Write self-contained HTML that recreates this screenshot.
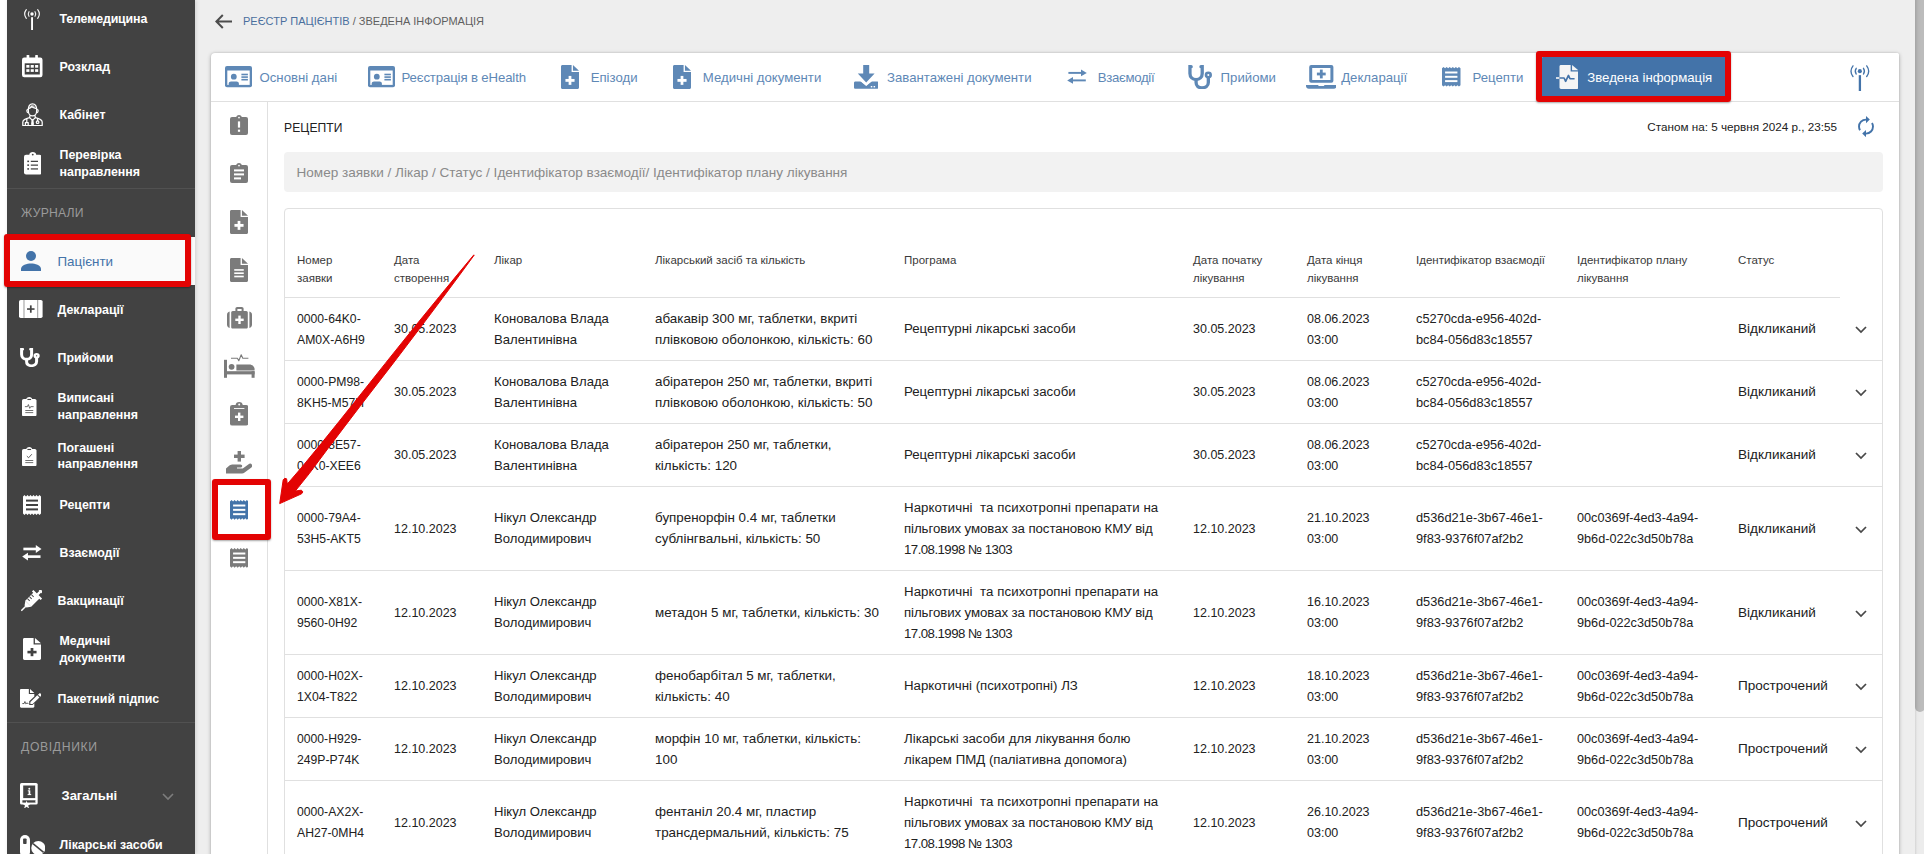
<!DOCTYPE html><html lang="uk"><head><meta charset="utf-8"><title>Зведена інформація</title><style>
*{box-sizing:border-box}
html,body{margin:0;padding:0}
body{width:1924px;height:854px;overflow:hidden;position:relative;background:#eeeeee;
 font-family:"Liberation Sans",sans-serif;color:#212121;font-size:13px}
.abs{position:absolute}
.strip{left:0;top:0;width:7px;height:854px;background:#fff}
.side{left:7px;top:0;width:188px;height:854px;background:#424242;box-shadow:1px 0 4px rgba(0,0,0,.13)}
.side .it{position:absolute;left:0;width:188px;color:#fff;font-weight:700;font-size:12.4px;line-height:17px;white-space:nowrap}
.side .it .tx{position:absolute;top:0}
.side .it svg{position:absolute}
.side .sec{position:absolute;left:14px;color:#9a9a9a;font-size:12.2px;letter-spacing:.2px;font-weight:400}
.side .hr{position:absolute;left:0;width:188px;height:1px;background:#515151}
.side .act{position:absolute;left:0;top:237px;width:188px;height:48px;background:#fafafa}
.crumb{left:243px;top:14px;font-size:11px;line-height:14px;color:#4a6f9e;white-space:nowrap}
.crumb b{font-weight:400;color:#5f5f5f}
.card{left:211px;top:53px;width:1688px;height:830px;background:#fff;border-radius:4px 1.5px 0 0;
 box-shadow:0 1px 4px rgba(0,0,0,.28),0 0 2px rgba(0,0,0,.12)}
.tabline{left:0;top:48px;width:1688px;height:1px;background:#e0e0e0}
.vline{left:56px;top:49px;width:1px;height:800px;background:#e0e0e0}
.tab{position:absolute;top:0;height:48px;color:#5e88b6;font-size:13.2px;line-height:48px;white-space:nowrap}
.tab svg{position:absolute}
.tab .tx{position:absolute;top:1px}
.tabact{position:absolute;left:1330px;top:4px;width:186px;height:41px;background:#4373a9;border-radius:2px}
.ttl{left:73px;top:68px;font-size:12.1px;line-height:14px;color:#212121;letter-spacing:.1px}
.asof{right:62px;top:67px;font-size:11.7px;line-height:14px;color:#212121;white-space:nowrap}
.search{left:73px;top:99px;width:1599px;height:40px;background:#f2f2f2;border-radius:4px;
 font-size:13.55px;line-height:42px;color:#8a8a8a;padding-left:12.5px;white-space:nowrap}
.tbl{left:73px;top:155px;width:1599px;height:700px;border:1px solid #e0e0e0;border-radius:4px}
.th{position:absolute;font-size:11.5px;line-height:18px;color:#3a3a3a;white-space:nowrap}
.td{position:absolute;font-size:13px;line-height:21px;color:#212121;white-space:nowrap}
.c0{font-size:12.2px}.c1,.c5,.c6{font-size:12.5px}.c2{font-size:13.1px}.c3{font-size:13.4px}.c4{font-size:13.25px}.c7{font-size:12.8px}.c8{font-size:12.7px}.c9{font-size:13.55px}
.rl{position:absolute;left:0;height:1px;background:#e0e0e0}
.sb{left:1915px;top:0;width:9px;height:854px;background:linear-gradient(to right,#d4d4d4,#e9e9e9 2px,#ececec 4px)}
.sbt{left:1915px;top:-6px;width:10px;height:718px;background:linear-gradient(to right,#a4a4a4,#b6b6b6 3px,#bcbcbc 6px);border-radius:5px}
</style></head><body>
<div class="abs strip"></div>
<svg class="abs" style="left:214.6px;top:14px" width="17" height="15" viewBox="0 0 17 15" preserveAspectRatio="none" ><path d="M7.8,1L1.4,7.5L7.8,14M1.6,7.5L17,7.5" fill="none" stroke="#4c4c4c" stroke-width="2"/></svg>
<div class="abs crumb">РЕЄСТР ПАЦІЄНТІВ <b>/ ЗВЕДЕНА ІНФОРМАЦІЯ</b></div>
<div class="abs card">
<div class="tabact"></div>
<svg class="abs" style="left:14.400000000000006px;top:13.400000000000006px" width="27" height="21.2" viewBox="0 0 27 21.2" preserveAspectRatio="none" ><rect x="0" y="0" width="27" height="21.2" rx="2" fill="#5e88b6"/><rect x="2.3" y="4.5" width="22.4" height="14.4" fill="#ffffff"/><circle cx="8.8" cy="10.7" r="2.9" fill="#5e88b6"/><path d="M3.7,19L3.7,17.8C3.7,16.2 4.8,15.5 6,15.5L11.6,15.5C12.8,15.5 13.9,16.2 13.9,17.8L13.9,19Z" fill="#5e88b6"/><rect x="16.4" y="7.7" width="6.5" height="1.6" fill="#5e88b6"/><rect x="16.4" y="10.3" width="6.5" height="1.6" fill="#5e88b6"/><rect x="16.4" y="12.9" width="6.5" height="1.6" fill="#5e88b6"/></svg>
<div class="tab" style="left:48.5px;color:#5e88b6"><span class="tx">Основні дані</span></div>
<svg class="abs" style="left:156.8px;top:13.400000000000006px" width="27" height="21.2" viewBox="0 0 27 21.2" preserveAspectRatio="none" ><rect x="0" y="0" width="27" height="21.2" rx="2" fill="#5e88b6"/><rect x="2.3" y="4.5" width="22.4" height="14.4" fill="#ffffff"/><circle cx="8.8" cy="10.7" r="2.9" fill="#5e88b6"/><path d="M3.7,19L3.7,17.8C3.7,16.2 4.8,15.5 6,15.5L11.6,15.5C12.8,15.5 13.9,16.2 13.9,17.8L13.9,19Z" fill="#5e88b6"/><rect x="16.4" y="7.7" width="6.5" height="1.6" fill="#5e88b6"/><rect x="16.4" y="10.3" width="6.5" height="1.6" fill="#5e88b6"/><rect x="16.4" y="12.9" width="6.5" height="1.6" fill="#5e88b6"/></svg>
<div class="tab" style="left:190.5px;color:#5e88b6"><span class="tx"><span style="letter-spacing:-.13px">Реєстрація в eHealth</span></span></div>
<svg class="abs" style="left:350px;top:12px" width="18" height="24" viewBox="0 0 17 22" preserveAspectRatio="none" ><path d="M1.4,0L10,0L10,6.4L17,6.4L17,20.6C17,21.4 16.4,22 15.6,22L1.4,22C.6,22 0,21.4 0,20.6L0,1.4C0,.6 .6,0 1.4,0Z" fill="#5e88b6"/><path d="M11.3,0L17,5.2L11.3,5.2Z" fill="#5e88b6"/><rect x="7.2" y="10" width="2.6" height="8.2" fill="#ffffff"/><rect x="4.2" y="12.8" width="8.6" height="2.6" fill="#ffffff"/></svg>
<div class="tab" style="left:379.70000000000005px;color:#5e88b6"><span class="tx">Епізоди</span></div>
<svg class="abs" style="left:462px;top:12px" width="18" height="24" viewBox="0 0 17 22" preserveAspectRatio="none" ><path d="M1.4,0L10,0L10,6.4L17,6.4L17,20.6C17,21.4 16.4,22 15.6,22L1.4,22C.6,22 0,21.4 0,20.6L0,1.4C0,.6 .6,0 1.4,0Z" fill="#5e88b6"/><path d="M11.3,0L17,5.2L11.3,5.2Z" fill="#5e88b6"/><rect x="7.2" y="10" width="2.6" height="8.2" fill="#ffffff"/><rect x="4.2" y="12.8" width="8.6" height="2.6" fill="#ffffff"/></svg>
<div class="tab" style="left:491.79999999999995px;color:#5e88b6"><span class="tx">Медичні документи</span></div>
<svg class="abs" style="left:643px;top:12px" width="24.4" height="23.8" viewBox="0 0 24.4 23.8" preserveAspectRatio="none" ><path d="M9.2,0L15.2,0L15.2,8.6L20.6,8.6L12.2,17.4L3.8,8.6L9.2,8.6Z" fill="#5e88b6"/><path d="M1.4,16.4L7.2,16.4L12.2,20.6L17.2,16.4L23,16.4C23.8,16.4 24.4,17 24.4,17.8L24.4,22.4C24.4,23.2 23.8,23.8 23,23.8L1.4,23.8C.6,23.8 0,23.2 0,22.4L0,17.8C0,17 .6,16.4 1.4,16.4Z" fill="#5e88b6"/><path d="M6.6,15.6L12.2,20.2L17.8,15.6" fill="none" stroke="#ffffff" stroke-width="1.3"/><rect x="16.8" y="21" width="1.5" height="1.4" fill="#ffffff"/><rect x="19.6" y="21" width="1.5" height="1.4" fill="#ffffff"/></svg>
<div class="tab" style="left:676px;color:#5e88b6"><span class="tx">Завантажені документи</span></div>
<svg class="abs" style="left:856px;top:16.400000000000006px" width="20" height="15.4" viewBox="0 0 20 16" preserveAspectRatio="none" ><rect x="1.4" y="3.05" width="15" height="2" fill="#5e88b6"/><path d="M14,0.44999999999999973L19.8,4.05L14,7.65Z" fill="#5e88b6"/><rect x="3.6" y="10.85" width="15.2" height="2" fill="#5e88b6"/><path d="M6,8.25L.2,11.85L6,15.45Z" fill="#5e88b6"/></svg>
<div class="tab" style="left:886.8px;color:#5e88b6"><span class="tx"><span style="letter-spacing:-.32px">Взаємодії</span></span></div>
<svg class="abs" style="left:976.5px;top:11.5px" width="24.5" height="24.5" viewBox="0 0 20 21" preserveAspectRatio="none" ><g fill="none" stroke="#5e88b6" stroke-width="2.7" stroke-linecap="round"><path d="M2.6,1.4L1.6,1.4L1.6,7.2C1.6,10.4 3.8,12.4 6.6,12.4C9.4,12.4 11.6,10.4 11.6,7.2L11.6,1.4L10.6,1.4"/><path d="M6.6,12.6L6.6,15C6.6,18 8.6,19.6 11.4,19.6C14.2,19.6 16.6,18 16.6,15L16.6,11.2"/><circle cx="16.6" cy="8.6" r="1.9" stroke-width="2.16"/></g></svg>
<div class="tab" style="left:1009.5999999999999px;color:#5e88b6"><span class="tx">Прийоми</span></div>
<svg class="abs" style="left:1094.6px;top:12px" width="30.6" height="23.8" viewBox="0 0 30.6 23.8" preserveAspectRatio="none" ><rect x="3.2" y="0" width="24.2" height="17.8" rx="2" fill="#5e88b6"/><rect x="6.2" y="3" width="18.2" height="12" fill="#ffffff"/><rect x="13.9" y="4.6" width="2.8" height="8.8" fill="#5e88b6"/><rect x="10.9" y="7.6" width="8.8" height="2.8" fill="#5e88b6"/><path d="M0,20L12,20L12.8,21L17.8,21L18.6,20L30.6,20L30.6,21C30.6,22.6 29.4,23.8 27.8,23.8L2.8,23.8C1.2,23.8 0,22.6 0,21Z" fill="#5e88b6"/></svg>
<div class="tab" style="left:1130.2px;color:#5e88b6"><span class="tx">Декларації</span></div>
<svg class="abs" style="left:1231.3px;top:14px" width="18.5" height="19.6" viewBox="0 0 18 20" preserveAspectRatio="none" ><path d="M0,1.4L1.50,0L3.00,1.4L4.50,0L6.00,1.4L7.50,0L9.00,1.4L10.50,0L12.00,1.4L13.50,0L15.00,1.4L16.50,0L18.00,1.4L18,18.6L16.50,20L15.00,18.6L13.50,20L12.00,18.6L10.50,20L9.00,18.6L7.50,20L6.00,18.6L4.50,20L3.00,18.6L1.50,20L0.00,18.6Z" fill="#5e88b6"/><rect x="3" y="4.6" width="12" height="2" fill="#ffffff"/><rect x="3" y="9" width="12" height="2" fill="#ffffff"/><rect x="3" y="13.4" width="12" height="2" fill="#ffffff"/></svg>
<div class="tab" style="left:1261.5px;color:#5e88b6"><span class="tx">Рецепти</span></div>
<svg class="abs" style="left:1345px;top:12px" width="22.3" height="24" viewBox="0 0 20.4 24" preserveAspectRatio="none" ><path d="M4.6,0L13.4,0L13.4,6.4L20.4,6.4L20.4,22.6C20.4,23.4 19.8,24 19,24L4.6,24C3.8,24 3.2,23.4 3.2,22.6L3.2,1.4C3.2,.6 3.8,0 4.6,0Z" fill="#f5f5f5"/><path d="M14.7,0L20.4,5.2L14.7,5.2Z" fill="#f5f5f5"/><rect x="0" y="12.2" width="3.2" height="1.6" fill="#f5f5f5"/><path d="M3.2,13L7.4,13L8.8,16.4L11.4,10.4L12.8,13.8L17,13.8" fill="none" stroke="#4373a9" stroke-width="1.5" stroke-linejoin="round"/></svg>
<div class="tab" style="left:1376.3px;color:#ffffff"><span class="tx">Зведена інформація</span></div>
<svg class="abs" style="left:1638.3px;top:11.599999999999994px" width="21.7" height="26" viewBox="0 0 18 21" preserveAspectRatio="none" ><circle cx="9" cy="5" r="1.7" fill="#4373a9"/><rect x="8.1" y="8.2" width="1.9" height="12.8" fill="#4373a9"/><g fill="none" stroke="#4373a9" stroke-width="1.1" stroke-linecap="round"><path d="M6,2.7Q4.4,5 6,7.3"/><path d="M12,2.7Q13.6,5 12,7.3"/><path d="M3.3,0.7Q0,5 3.3,9.3"/><path d="M14.7,0.7Q18,5 14.7,9.3"/></g></svg>
<div class="abs tabline"></div><div class="abs vline"></div>
<svg class="abs" style="left:19px;top:62px" width="18" height="20" viewBox="0 0 18 20" preserveAspectRatio="none" ><rect x="0" y="2" width="18" height="18" rx="2" fill="#7b7b7b"/><path d="M6.2,2.6C6.2,1 7.4,0 9,0C10.6,0 11.8,1 11.8,2.6L12.4,3.6L5.6,3.6Z" fill="#7b7b7b"/><circle cx="9" cy="2.6" r=".9" fill="#ffffff"/><rect x="7.9" y="6.4" width="2.2" height="6.2" fill="#ffffff"/><rect x="7.9" y="14.6" width="2.2" height="2.2" fill="#ffffff"/></svg>
<svg class="abs" style="left:19px;top:110px" width="18" height="20" viewBox="0 0 18 20" preserveAspectRatio="none" ><rect x="0" y="2" width="18" height="18" rx="2" fill="#7b7b7b"/><path d="M6.2,2.6C6.2,1 7.4,0 9,0C10.6,0 11.8,1 11.8,2.6L12.4,3.6L5.6,3.6Z" fill="#7b7b7b"/><circle cx="9" cy="2.6" r=".9" fill="#ffffff"/><rect x="4" y="6.4" width="10" height="2" fill="#ffffff"/><rect x="4" y="10.4" width="10" height="2" fill="#ffffff"/><rect x="4" y="14.4" width="7" height="2" fill="#ffffff"/></svg>
<svg class="abs" style="left:19px;top:157px" width="18" height="24" viewBox="0 0 17 22" preserveAspectRatio="none" ><path d="M1.4,0L10,0L10,6.4L17,6.4L17,20.6C17,21.4 16.4,22 15.6,22L1.4,22C.6,22 0,21.4 0,20.6L0,1.4C0,.6 .6,0 1.4,0Z" fill="#7b7b7b"/><path d="M11.3,0L17,5.2L11.3,5.2Z" fill="#7b7b7b"/><rect x="7.2" y="10" width="2.6" height="8.2" fill="#ffffff"/><rect x="4.2" y="12.8" width="8.6" height="2.6" fill="#ffffff"/></svg>
<svg class="abs" style="left:19px;top:205px" width="18" height="24" viewBox="0 0 17 22" preserveAspectRatio="none" ><path d="M1.4,0L10,0L10,6.4L17,6.4L17,20.6C17,21.4 16.4,22 15.6,22L1.4,22C.6,22 0,21.4 0,20.6L0,1.4C0,.6 .6,0 1.4,0Z" fill="#7b7b7b"/><path d="M11.3,0L17,5.2L11.3,5.2Z" fill="#7b7b7b"/><rect x="4" y="10.2" width="9" height="1.5" fill="#ffffff"/><rect x="4" y="13.2" width="9" height="1.5" fill="#ffffff"/><rect x="4" y="16.2" width="9" height="1.5" fill="#ffffff"/></svg>
<svg class="abs" style="left:15.5px;top:254.2px" width="25" height="21.6" viewBox="0 0 25 21.6" preserveAspectRatio="none" ><path d="M8.4,4L8.4,1.8C8.4,.8 9.2,0 10.2,0L14.8,0C15.8,0 16.6,.8 16.6,1.8L16.6,4L19.2,4C20.2,4 20.8,4.8 20.8,5.6L20.8,20C20.8,21 20.2,21.6 19.2,21.6L5.8,21.6C4.8,21.6 4.2,21 4.2,20L4.2,5.6C4.2,4.8 4.8,4 5.8,4ZM10.4,4L14.6,4L14.6,2L10.4,2Z" fill="#7b7b7b"/><path d="M2.6,4.6C1,5 0,6.2 0,7.8L0,17.8C0,19.4 1,20.6 2.6,21Z" fill="#7b7b7b"/><path d="M22.4,4.6C24,5 25,6.2 25,7.8L25,17.8C25,19.4 24,20.6 22.4,21Z" fill="#7b7b7b"/><rect x="11.3" y="8.6" width="2.4" height="8.4" fill="#ffffff"/><rect x="8.3" y="11.6" width="8.4" height="2.4" fill="#ffffff"/></svg>
<svg class="abs" style="left:13px;top:301px" width="30.6" height="23.8" viewBox="0 0 30.6 23.8" preserveAspectRatio="none" ><rect x="0" y="5.8" width="3" height="18" fill="#7b7b7b"/><rect x="0" y="17.2" width="30.6" height="3.2" fill="#7b7b7b"/><rect x="27.6" y="17.2" width="3" height="6.6" fill="#7b7b7b"/><path d="M12.4,16.4L12.4,10.6L25.4,10.6C28.4,10.6 30.6,12.8 30.6,15.4L30.6,16.4Z" fill="#7b7b7b"/><circle cx="7.6" cy="12.8" r="2.9" fill="#7b7b7b"/><path d="M7,4.2L13.4,4.2L14.8,6.8L17.2,0.8L18.8,4.2L24.4,4.2" fill="none" stroke="#7b7b7b" stroke-width="1.1" stroke-linejoin="round"/></svg>
<svg class="abs" style="left:19px;top:349px" width="18.4" height="23.6" viewBox="0 0 18.4 23.6" preserveAspectRatio="none" ><rect x="0" y="3" width="18.4" height="20.6" rx="2.2" fill="#7b7b7b"/><path d="M5.6,3.4C5.6,1.2 7.2,0 9.2,0C11.2,0 12.8,1.2 12.8,3.4L13.6,6L4.8,6Z" fill="#7b7b7b"/><circle cx="9.2" cy="2.6" r="1" fill="#ffffff"/><rect x="4" y="6" width="10.4" height=".9" fill="#ffffff"/><rect x="8" y="10.6" width="2.4" height="8.4" fill="#ffffff"/><rect x="5" y="13.6" width="8.4" height="2.4" fill="#ffffff"/></svg>
<svg class="abs" style="left:14.699999999999989px;top:397.8px" width="26.6" height="22.8" viewBox="0 0 26.6 22.8" preserveAspectRatio="none" ><rect x="11.6" y="0" width="3.4" height="10.6" fill="#7b7b7b"/><rect x="8" y="3.6" width="10.6" height="3.4" fill="#7b7b7b"/><path d="M0,17.4L3.4,14.6C4.6,13.6 5.8,13.4 7,13.4L14.4,13.4C15.6,13.4 16.2,14.2 16.2,15C16.2,15.8 15.6,16.6 14.4,16.6L11,16.6L11,17.4L16.8,17.4L22.6,13.2C23.6,12.4 25,12.4 25.8,13.4C26.6,14.4 26.4,15.6 25.4,16.4L18.6,21.6C17.8,22.2 17,22.6 16,22.6L0,22.6Z" fill="#7b7b7b"/></svg>
<svg class="abs" style="left:19px;top:447.3px" width="18.4" height="19.7" viewBox="0 0 18 20" preserveAspectRatio="none" ><path d="M0,1.4L1.50,0L3.00,1.4L4.50,0L6.00,1.4L7.50,0L9.00,1.4L10.50,0L12.00,1.4L13.50,0L15.00,1.4L16.50,0L18.00,1.4L18,18.6L16.50,20L15.00,18.6L13.50,20L12.00,18.6L10.50,20L9.00,18.6L7.50,20L6.00,18.6L4.50,20L3.00,18.6L1.50,20L0.00,18.6Z" fill="#4373a9"/><rect x="3" y="4.6" width="12" height="2" fill="#ffffff"/><rect x="3" y="9" width="12" height="2" fill="#ffffff"/><rect x="3" y="13.4" width="12" height="2" fill="#ffffff"/></svg>
<svg class="abs" style="left:19px;top:495.29999999999995px" width="18.4" height="19.7" viewBox="0 0 18 20" preserveAspectRatio="none" ><path d="M0,1.4L1.50,0L3.00,1.4L4.50,0L6.00,1.4L7.50,0L9.00,1.4L10.50,0L12.00,1.4L13.50,0L15.00,1.4L16.50,0L18.00,1.4L18,18.6L16.50,20L15.00,18.6L13.50,20L12.00,18.6L10.50,20L9.00,18.6L7.50,20L6.00,18.6L4.50,20L3.00,18.6L1.50,20L0.00,18.6Z" fill="#7b7b7b"/><rect x="3" y="4.6" width="12" height="2" fill="#ffffff"/><rect x="3" y="9" width="12" height="2" fill="#ffffff"/><rect x="3" y="13.4" width="12" height="2" fill="#ffffff"/></svg>
<div class="abs ttl">РЕЦЕПТИ</div>
<div class="abs asof">Станом на: 5 червня 2024 р., 23:55</div>
<svg class="abs" style="left:1644.5px;top:63.3px" width="20" height="21.2" viewBox="0 0 20 21.2" preserveAspectRatio="none" ><g fill="none" stroke="#4373a9" stroke-width="1.9"><path d="M10,3.6C6,3.6 3,6.8 3,10.6C3,12 3.4,13.2 4,14.2"/><path d="M10,17.6C14,17.6 17,14.4 17,10.6C17,9.2 16.6,8 16,7"/></g><path d="M10,0L10,7.2L13.8,3.6Z" fill="#4373a9"/><path d="M10,21.2L10,14L6.2,17.6Z" fill="#4373a9"/></svg>
<div class="abs search">Номер заявки / Лікар / Статус / Ідентифікатор взаємодії/ Ідентифікатор плану лікування</div>
<div class="abs tbl">
<div class="th" style="left:12px;top:42px">Номер<br>заявки</div>
<div class="th" style="left:109px;top:42px">Дата<br>створення</div>
<div class="th" style="left:209px;top:42px">Лікар</div>
<div class="th" style="left:370px;top:42px">Лікарський засіб та кількість</div>
<div class="th" style="left:619px;top:42px">Програма</div>
<div class="th" style="left:908px;top:42px">Дата початку<br>лікування</div>
<div class="th" style="left:1022px;top:42px">Дата кінця<br>лікування</div>
<div class="th" style="left:1131px;top:42px">Ідентифікатор взаємодії</div>
<div class="th" style="left:1292px;top:42px">Ідентифікатор плану<br>лікування</div>
<div class="th" style="left:1453px;top:42px">Статус</div>
<div class="rl" style="top:88px;width:1555px"></div>
<div class="td c0" style="left:12px;top:100px">0000-64K0-<br>AM0X-A6H9</div>
<div class="td c1" style="left:109px;top:110px">30.05.2023</div>
<div class="td c2" style="left:209px;top:99px">Коновалова Влада<br>Валентинівна</div>
<div class="td c3" style="left:370px;top:99px">абакавір 300 мг, таблетки, вкриті<br>плівковою оболонкою, кількість: 60</div>
<div class="td c4" style="left:619px;top:109px">Рецептурні лікарські засоби</div>
<div class="td c5" style="left:908px;top:110px">30.05.2023</div>
<div class="td c6" style="left:1022px;top:100px">08.06.2023<br>03:00</div>
<div class="td c7" style="left:1131px;top:99px">c5270cda-e956-402d-<br>bc84-056d83c18557</div>
<div class="td c9" style="left:1453px;top:109px">Відкликаний</div>
<svg class="abs" style="left:1569.7px;top:117.19999999999999px" width="12" height="8" viewBox="0 0 12 8" preserveAspectRatio="none" ><path d="M1,1L6,6L11,1" fill="none" stroke="#484848" stroke-width="1.75"/></svg>
<div class="rl" style="top:151px;width:1597px"></div>
<div class="td c0" style="left:12px;top:163px">0000-PM98-<br>8KH5-M57H</div>
<div class="td c1" style="left:109px;top:173px">30.05.2023</div>
<div class="td c2" style="left:209px;top:162px">Коновалова Влада<br>Валентинівна</div>
<div class="td c3" style="left:370px;top:162px">абіратерон 250 мг, таблетки, вкриті<br>плівковою оболонкою, кількість: 50</div>
<div class="td c4" style="left:619px;top:172px">Рецептурні лікарські засоби</div>
<div class="td c5" style="left:908px;top:173px">30.05.2023</div>
<div class="td c6" style="left:1022px;top:163px">08.06.2023<br>03:00</div>
<div class="td c7" style="left:1131px;top:162px">c5270cda-e956-402d-<br>bc84-056d83c18557</div>
<div class="td c9" style="left:1453px;top:172px">Відкликаний</div>
<svg class="abs" style="left:1569.7px;top:180.2px" width="12" height="8" viewBox="0 0 12 8" preserveAspectRatio="none" ><path d="M1,1L6,6L11,1" fill="none" stroke="#484848" stroke-width="1.75"/></svg>
<div class="rl" style="top:214px;width:1597px"></div>
<div class="td c0" style="left:12px;top:226px">0000-8E57-<br>04K0-XEE6</div>
<div class="td c1" style="left:109px;top:236px">30.05.2023</div>
<div class="td c2" style="left:209px;top:225px">Коновалова Влада<br>Валентинівна</div>
<div class="td c3" style="left:370px;top:225px">абіратерон 250 мг, таблетки,<br>кількість: 120</div>
<div class="td c4" style="left:619px;top:235px">Рецептурні лікарські засоби</div>
<div class="td c5" style="left:908px;top:236px">30.05.2023</div>
<div class="td c6" style="left:1022px;top:226px">08.06.2023<br>03:00</div>
<div class="td c7" style="left:1131px;top:225px">c5270cda-e956-402d-<br>bc84-056d83c18557</div>
<div class="td c9" style="left:1453px;top:235px">Відкликаний</div>
<svg class="abs" style="left:1569.7px;top:243.2px" width="12" height="8" viewBox="0 0 12 8" preserveAspectRatio="none" ><path d="M1,1L6,6L11,1" fill="none" stroke="#484848" stroke-width="1.75"/></svg>
<div class="rl" style="top:277px;width:1597px"></div>
<div class="td c0" style="left:12px;top:299px">0000-79A4-<br>53H5-AKT5</div>
<div class="td c1" style="left:109px;top:310px">12.10.2023</div>
<div class="td c2" style="left:209px;top:298px">Нікул Олександр<br>Володимирович</div>
<div class="td c3" style="left:370px;top:298px">бупренорфін 0.4 мг, таблетки<br>сублінгвальні, кількість: 50</div>
<div class="td c4" style="left:619px;top:288px"><span style="letter-spacing:.065px">Наркотичні&nbsp; та психотропні препарати на</span><br><span style="letter-spacing:-.08px">пільгових умовах за постановою КМУ від</span><br><span style="letter-spacing:-.55px">17.08.1998 № 1303</span></div>
<div class="td c5" style="left:908px;top:310px">12.10.2023</div>
<div class="td c6" style="left:1022px;top:299px">21.10.2023<br>03:00</div>
<div class="td c7" style="left:1131px;top:298px">d536d21e-3b67-46e1-<br>9f83-9376f07af2b2</div>
<div class="td c8" style="left:1292px;top:299px">00c0369f-4ed3-4a94-<br>9b6d-022c3d50b78a</div>
<div class="td c9" style="left:1453px;top:309px">Відкликаний</div>
<svg class="abs" style="left:1569.7px;top:316.70000000000005px" width="12" height="8" viewBox="0 0 12 8" preserveAspectRatio="none" ><path d="M1,1L6,6L11,1" fill="none" stroke="#484848" stroke-width="1.75"/></svg>
<div class="rl" style="top:361px;width:1597px"></div>
<div class="td c0" style="left:12px;top:383px">0000-X81X-<br>9560-0H92</div>
<div class="td c1" style="left:109px;top:394px">12.10.2023</div>
<div class="td c2" style="left:209px;top:382px">Нікул Олександр<br>Володимирович</div>
<div class="td c3" style="left:370px;top:393px">метадон 5 мг, таблетки, кількість: 30</div>
<div class="td c4" style="left:619px;top:372px"><span style="letter-spacing:.065px">Наркотичні&nbsp; та психотропні препарати на</span><br><span style="letter-spacing:-.08px">пільгових умовах за постановою КМУ від</span><br><span style="letter-spacing:-.55px">17.08.1998 № 1303</span></div>
<div class="td c5" style="left:908px;top:394px">12.10.2023</div>
<div class="td c6" style="left:1022px;top:383px">16.10.2023<br>03:00</div>
<div class="td c7" style="left:1131px;top:382px">d536d21e-3b67-46e1-<br>9f83-9376f07af2b2</div>
<div class="td c8" style="left:1292px;top:383px">00c0369f-4ed3-4a94-<br>9b6d-022c3d50b78a</div>
<div class="td c9" style="left:1453px;top:393px">Відкликаний</div>
<svg class="abs" style="left:1569.7px;top:400.70000000000005px" width="12" height="8" viewBox="0 0 12 8" preserveAspectRatio="none" ><path d="M1,1L6,6L11,1" fill="none" stroke="#484848" stroke-width="1.75"/></svg>
<div class="rl" style="top:445px;width:1597px"></div>
<div class="td c0" style="left:12px;top:457px">0000-H02X-<br>1X04-T822</div>
<div class="td c1" style="left:109px;top:467px">12.10.2023</div>
<div class="td c2" style="left:209px;top:456px">Нікул Олександр<br>Володимирович</div>
<div class="td c3" style="left:370px;top:456px">фенобарбітал 5 мг, таблетки,<br>кількість: 40</div>
<div class="td c4" style="left:619px;top:466px">Наркотичні (психотропні) ЛЗ</div>
<div class="td c5" style="left:908px;top:467px">12.10.2023</div>
<div class="td c6" style="left:1022px;top:457px">18.10.2023<br>03:00</div>
<div class="td c7" style="left:1131px;top:456px">d536d21e-3b67-46e1-<br>9f83-9376f07af2b2</div>
<div class="td c8" style="left:1292px;top:457px">00c0369f-4ed3-4a94-<br>9b6d-022c3d50b78a</div>
<div class="td c9" style="left:1453px;top:466px">Прострочений</div>
<svg class="abs" style="left:1569.7px;top:474.20000000000005px" width="12" height="8" viewBox="0 0 12 8" preserveAspectRatio="none" ><path d="M1,1L6,6L11,1" fill="none" stroke="#484848" stroke-width="1.75"/></svg>
<div class="rl" style="top:508px;width:1597px"></div>
<div class="td c0" style="left:12px;top:520px">0000-H929-<br>249P-P74K</div>
<div class="td c1" style="left:109px;top:530px">12.10.2023</div>
<div class="td c2" style="left:209px;top:519px">Нікул Олександр<br>Володимирович</div>
<div class="td c3" style="left:370px;top:519px">морфін 10 мг, таблетки, кількість:<br>100</div>
<div class="td c4" style="left:619px;top:519px">Лікарські засоби для лікування болю<br>лікарем ПМД (паліативна допомога)</div>
<div class="td c5" style="left:908px;top:530px">12.10.2023</div>
<div class="td c6" style="left:1022px;top:520px">21.10.2023<br>03:00</div>
<div class="td c7" style="left:1131px;top:519px">d536d21e-3b67-46e1-<br>9f83-9376f07af2b2</div>
<div class="td c8" style="left:1292px;top:520px">00c0369f-4ed3-4a94-<br>9b6d-022c3d50b78a</div>
<div class="td c9" style="left:1453px;top:529px">Прострочений</div>
<svg class="abs" style="left:1569.7px;top:537.2px" width="12" height="8" viewBox="0 0 12 8" preserveAspectRatio="none" ><path d="M1,1L6,6L11,1" fill="none" stroke="#484848" stroke-width="1.75"/></svg>
<div class="rl" style="top:571px;width:1597px"></div>
<div class="td c0" style="left:12px;top:593px">0000-AX2X-<br>AH27-0MH4</div>
<div class="td c1" style="left:109px;top:604px">12.10.2023</div>
<div class="td c2" style="left:209px;top:592px">Нікул Олександр<br>Володимирович</div>
<div class="td c3" style="left:370px;top:592px">фентаніл 20.4 мг, пластир<br>трансдермальний, кількість: 75</div>
<div class="td c4" style="left:619px;top:582px"><span style="letter-spacing:.065px">Наркотичні&nbsp; та психотропні препарати на</span><br><span style="letter-spacing:-.08px">пільгових умовах за постановою КМУ від</span><br><span style="letter-spacing:-.55px">17.08.1998 № 1303</span></div>
<div class="td c5" style="left:908px;top:604px">12.10.2023</div>
<div class="td c6" style="left:1022px;top:593px">26.10.2023<br>03:00</div>
<div class="td c7" style="left:1131px;top:592px">d536d21e-3b67-46e1-<br>9f83-9376f07af2b2</div>
<div class="td c8" style="left:1292px;top:593px">00c0369f-4ed3-4a94-<br>9b6d-022c3d50b78a</div>
<div class="td c9" style="left:1453px;top:603px">Прострочений</div>
<svg class="abs" style="left:1569.7px;top:610.7px" width="12" height="8" viewBox="0 0 12 8" preserveAspectRatio="none" ><path d="M1,1L6,6L11,1" fill="none" stroke="#484848" stroke-width="1.75"/></svg>
</div>
</div>
<div class="abs side">
<div class="act"></div>
<svg class="abs" style="left:16px;top:9px" width="18" height="21" viewBox="0 0 18 21" preserveAspectRatio="none" ><circle cx="9" cy="5" r="1.7" fill="#ffffff"/><rect x="8.1" y="8.2" width="1.9" height="12.8" fill="#ffffff"/><g fill="none" stroke="#ffffff" stroke-width="1.1" stroke-linecap="round"><path d="M6,2.7Q4.4,5 6,7.3"/><path d="M12,2.7Q13.6,5 12,7.3"/><path d="M3.3,0.7Q0,5 3.3,9.3"/><path d="M14.7,0.7Q18,5 14.7,9.3"/></g></svg>
<svg class="abs" style="left:15px;top:55px" width="20.5" height="22.5" viewBox="0 0 20.5 22.5" preserveAspectRatio="none" ><rect x="0" y="2.6" width="20.5" height="19.6" rx="2.2" fill="#ffffff"/><rect x="4.6" y="0" width="2.7" height="4.5" rx=".6" fill="#ffffff"/><rect x="13.2" y="0" width="2.7" height="4.5" rx=".6" fill="#ffffff"/><rect x="2.7" y="8.3" width="15.1" height="11.2" fill="#424242"/><rect x="4.3" y="10" width="3.1" height="2.7" fill="#ffffff"/><rect x="4.3" y="14.2" width="3.1" height="2.7" fill="#ffffff"/><rect x="8.7" y="10" width="3.1" height="2.7" fill="#ffffff"/><rect x="8.7" y="14.2" width="3.1" height="2.7" fill="#ffffff"/><rect x="13.1" y="10" width="3.1" height="2.7" fill="#ffffff"/><rect x="13.1" y="14.2" width="3.1" height="2.7" fill="#ffffff"/></svg>
<svg class="abs" style="left:15px;top:102.5px" width="21" height="23.4" viewBox="0 0 21 23.4" preserveAspectRatio="none" ><g fill="none" stroke="#ffffff" stroke-width="1.25" stroke-linejoin="round" stroke-linecap="round"><path d="M6.3,7.2C6.3,3 8,1 10.5,1C13,1 14.7,3 14.7,7.2C14.7,10.5 13,13 10.5,13C8,13 6.3,10.5 6.3,7.2Z"/><path d="M6.4,5.6C8,5.4 9,4.4 9.6,3.4C10.8,4.8 12.8,5.4 14.6,5.6"/><path d="M5.6,6.6C4.6,6.6 4.6,9.4 6,9.6M15.4,6.6C16.4,6.6 16.4,9.4 15,9.6"/><path d="M8,12.6L7.6,14.6C4,15.4 1,16.6 .8,19L.8,22.6L20.2,22.6L20.2,19C20,16.6 17,15.4 13.4,14.6L13,12.6"/><path d="M7.6,14.6L10.5,17.4L13.4,14.6"/><path d="M4.8,15.8L4.8,19.6M3.4,19.6L3.4,22.2M6.2,19.6L6.2,22.2M3.4,19.6L6.2,19.6"/><circle cx="15.6" cy="19.2" r="1.3"/><path d="M15.6,15.6L15.6,17.8"/></g><path d="M9.6,16.6L11.4,16.6L12,21.4L10.5,22.6L9,21.4Z" fill="#ffffff"/><path d="M8.6,3C9.6,1.6 11.6,1.6 12.6,3L12.8,5L8.4,5Z" fill="#ffffff" opacity=".55"/></svg>
<svg class="abs" style="left:16.5px;top:152px" width="17.5" height="22.5" viewBox="0 0 17 22" preserveAspectRatio="none" ><rect x="0" y="2.6" width="17" height="19.4" rx="2" fill="#ffffff"/><path d="M5.2,2.6C5.2,1 6.6,0 8.5,0C10.4,0 11.8,1 11.8,2.6L12.6,5L4.4,5Z" fill="#ffffff"/><circle cx="8.5" cy="2.5" r=".9" fill="#424242"/><rect x="3.2" y="8.4" width="1.7" height="1.5" fill="#424242"/><rect x="6.6" y="8.55" width="7" height="1.2" fill="#424242"/><rect x="3.2" y="12.1" width="1.7" height="1.5" fill="#424242"/><rect x="6.6" y="12.25" width="7" height="1.2" fill="#424242"/><rect x="3.2" y="15.8" width="1.7" height="1.5" fill="#424242"/><rect x="6.6" y="15.950000000000001" width="7" height="1.2" fill="#424242"/></svg>
<svg class="abs" style="left:14px;top:251px" width="20" height="20" viewBox="0 0 20 20" preserveAspectRatio="none" ><circle cx="10" cy="5" r="5" fill="#4373a9"/><path d="M0,20L0,18C0,14.4 6,12.6 10,12.6C14,12.6 20,14.4 20,18L20,20Z" fill="#4373a9"/></svg>
<svg class="abs" style="left:12.3px;top:300px" width="23.6" height="17.9" viewBox="0 0 22 18" preserveAspectRatio="none" ><rect x="0" y="0" width="22" height="18" rx="1.6" fill="#ffffff"/><rect x="4.2" y="0" width=".9" height="18" fill="#424242" opacity=".55"/><rect x="17" y="0" width=".9" height="18" fill="#424242" opacity=".55"/><rect x="10.2" y="5.4" width="1.6" height="7.4" fill="#424242"/><rect x="7.5" y="8.3" width="7" height="1.6" fill="#424242"/></svg>
<svg class="abs" style="left:13px;top:347.5px" width="20" height="19" viewBox="0 0 20 21" preserveAspectRatio="none" ><g fill="none" stroke="#ffffff" stroke-width="3" stroke-linecap="round"><path d="M2.6,1.4L1.6,1.4L1.6,7.2C1.6,10.4 3.8,12.4 6.6,12.4C9.4,12.4 11.6,10.4 11.6,7.2L11.6,1.4L10.6,1.4"/><path d="M6.6,12.6L6.6,15C6.6,18 8.6,19.6 11.4,19.6C14.2,19.6 16.6,18 16.6,15L16.6,11.2"/><circle cx="16.6" cy="8.6" r="1.9" stroke-width="2.4000000000000004"/></g></svg>
<svg class="abs" style="left:15px;top:396.6px" width="14.5" height="19.4" viewBox="0 0 15 20.5" preserveAspectRatio="none" ><rect x="0" y="2" width="15" height="18.5" rx="1.8" fill="#ffffff"/><path d="M4.4,2.6C4.4,.9 5.8,0 7.5,0C9.2,0 10.6,.9 10.6,2.6L11.2,4.2L3.8,4.2Z" fill="#ffffff"/><rect x="5.6" y="2" width="3.8" height="1.2" fill="#424242"/><path d="M3,10.2L5.6,10.2L6.6,8L8,12L9,10.2L12,10.2" fill="none" stroke="#424242" stroke-width=".8"/><rect x="3.4" y="14" width="8.2" height=".8" fill="#424242"/><rect x="3.4" y="16.2" width="8.2" height=".8" fill="#424242"/></svg>
<svg class="abs" style="left:15px;top:446.5px" width="14.5" height="19.4" viewBox="0 0 15 20.5" preserveAspectRatio="none" ><rect x="0" y="2" width="15" height="18.5" rx="1.8" fill="#ffffff"/><path d="M4.4,2.6C4.4,.9 5.8,0 7.5,0C9.2,0 10.6,.9 10.6,2.6L11.2,4.2L3.8,4.2Z" fill="#ffffff"/><rect x="5.6" y="2" width="3.8" height="1.2" fill="#424242"/><path d="M5,9.6L6.8,11.4L10.2,7.6" fill="none" stroke="#424242" stroke-width=".9"/><rect x="3.4" y="14" width="8.2" height=".8" fill="#424242"/><rect x="3.4" y="16.2" width="8.2" height=".8" fill="#424242"/></svg>
<svg class="abs" style="left:16px;top:494.5px" width="18" height="20" viewBox="0 0 18 20" preserveAspectRatio="none" ><path d="M0,1.4L1.50,0L3.00,1.4L4.50,0L6.00,1.4L7.50,0L9.00,1.4L10.50,0L12.00,1.4L13.50,0L15.00,1.4L16.50,0L18.00,1.4L18,18.6L16.50,20L15.00,18.6L13.50,20L12.00,18.6L10.50,20L9.00,18.6L7.50,20L6.00,18.6L4.50,20L3.00,18.6L1.50,20L0.00,18.6Z" fill="#ffffff"/><rect x="3" y="4.6" width="12" height="2" fill="#424242"/><rect x="3" y="9" width="12" height="2" fill="#424242"/><rect x="3" y="13.4" width="12" height="2" fill="#424242"/></svg>
<svg class="abs" style="left:15px;top:545.3px" width="19.7" height="15.7" viewBox="0 0 20 16" preserveAspectRatio="none" ><rect x="1.4" y="2.6999999999999997" width="15" height="2.7" fill="#ffffff"/><path d="M14,0.0L19.8,4.05L14,8.1Z" fill="#ffffff"/><rect x="3.6" y="10.5" width="15.2" height="2.7" fill="#ffffff"/><path d="M6,7.8L.2,11.85L6,15.899999999999999Z" fill="#ffffff"/></svg>
<svg class="abs" style="left:13.5px;top:589.5px" width="21" height="22" viewBox="0 0 21 22" preserveAspectRatio="none" ><g transform="rotate(45 10.5 10.5)"><rect x="6.3" y="3.4" width="8.4" height="11.8" fill="#ffffff"/><path d="M6.3,15L14.7,15L11.8,19L9.2,19Z" fill="#ffffff"/><rect x="9.8" y="18.6" width="1.5" height="6.4" fill="#ffffff"/><rect x="4.4" y="1.7" width="12.2" height="2.1" fill="#ffffff"/><rect x="9.3" y="-2.4" width="2.4" height="4.6" fill="#ffffff"/><rect x="6.2" y="-4" width="8.6" height="2.1" fill="#ffffff"/><rect x="6.3" y="6" width="3.2" height=".9" fill="#424242"/><rect x="6.3" y="8.8" width="3.2" height=".9" fill="#424242"/><rect x="6.3" y="11.6" width="3.2" height=".9" fill="#424242"/></g></svg>
<svg class="abs" style="left:16px;top:637.5px" width="18" height="22" viewBox="0 0 17 22" preserveAspectRatio="none" ><path d="M1.4,0L10,0L10,6.4L17,6.4L17,20.6C17,21.4 16.4,22 15.6,22L1.4,22C.6,22 0,21.4 0,20.6L0,1.4C0,.6 .6,0 1.4,0Z" fill="#ffffff"/><path d="M11.3,0L17,5.2L11.3,5.2Z" fill="#ffffff"/><rect x="7.2" y="10" width="2.6" height="8.2" fill="#424242"/><rect x="4.2" y="12.8" width="8.6" height="2.6" fill="#424242"/></svg>
<svg class="abs" style="left:12.5px;top:689px" width="21.6" height="18.7" viewBox="0 0 22 20" preserveAspectRatio="none" ><path d="M1.2,0L9,0L9,5.4L14.6,5.4L14.6,8L9.4,13.2L9.4,17L12.8,17L14.6,15.2L14.6,18.8C14.6,19.5 14.1,20 13.4,20L1.2,20C.5,20 0,19.5 0,18.8L0,1.2C0,.5 .5,0 1.2,0Z" fill="#ffffff"/><path d="M10.2,0L14.6,4.3L10.2,4.3Z" fill="#ffffff"/><path d="M2.4,15.6L4.2,15.6L5,13.4L6,16L7,15L8.6,15.6" fill="none" stroke="#424242" stroke-width=".9"/><path d="M10.6,13.8L17.6,6.8L19.8,9L12.8,16L10.6,16Z" fill="#ffffff"/><path d="M18.3,6.1L19.4,5C19.9,4.5 20.6,4.5 21.1,5L21.7,5.6C22.2,6.1 22.2,6.8 21.7,7.3L20.6,8.4Z" fill="#ffffff"/></svg>
<svg class="abs" style="left:13.399999999999999px;top:782.8px" width="17.7" height="25.7" viewBox="0 0 17.7 25.7" preserveAspectRatio="none" ><rect x="0" y="0" width="17.7" height="21.6" rx="1.6" fill="#ffffff"/><rect x="3.2" y="2.5" width="12" height="12.6" fill="#424242"/><circle cx="9.3" cy="5.7" r=".95" fill="#ffffff"/><rect x="8.6" y="7.4" width="1.7" height="4.4" fill="#ffffff"/><rect x="7.8" y="7.4" width="1.6" height=".9" fill="#ffffff"/><rect x="7.6" y="11.1" width="3.6" height="1" fill="#ffffff"/><rect x="2.4" y="17.3" width="13.4" height="2.3" fill="#424242"/><rect x="15.2" y="17.3" width=".6" height="2.3" fill="#ffffff"/><path d="M6.6,17.6L7.6,20.7L10.8,20.7L8.2,22.6L9.2,25.7L6.6,23.8L4,25.7L5,22.6L2.4,20.7L5.6,20.7Z" fill="#ffffff"/></svg>
<svg class="abs" style="left:12.7px;top:834.5px" width="25.4" height="22" viewBox="0 0 25.4 22" preserveAspectRatio="none" ><rect x="0" y="0" width="10" height="22" rx="5" fill="#ffffff"/><rect x="3.1" y="3.4" width="3.5" height="5.6" rx=".8" fill="#424242"/><circle cx="18.3" cy="13" r="7.05" fill="#ffffff"/><path d="M13,8.6L23.6,17.4" stroke="#424242" stroke-width="1.5"/></svg>
<svg class="abs" style="left:154.5px;top:793px" width="12" height="8" viewBox="0 0 12 8" preserveAspectRatio="none" ><path d="M1,1L6,6L11,1" fill="none" stroke="#7d7d7d" stroke-width="1.6"/></svg>
<div class="it" style="top:11.0px;letter-spacing:-.15px"><span class="tx" style="left:52.5px">Телемедицина</span></div>
<div class="it" style="top:58.5px;"><span class="tx" style="left:52.5px">Розклад</span></div>
<div class="it" style="top:107.0px;"><span class="tx" style="left:52.5px">Кабінет</span></div>
<div class="it" style="top:147.0px;"><span class="tx" style="left:52.5px">Перевірка</span></div>
<div class="it" style="top:164.0px;"><span class="tx" style="left:52.5px">направлення</span></div>
<div class="hr" style="top:188px"></div>
<div class="sec" style="top:206px;line-height:15px">ЖУРНАЛИ</div>
<div class="it" style="top:253.0px;color:#4373a9;font-weight:400;font-size:13.4px"><span class="tx" style="left:50.5px">Пацієнти</span></div>
<div class="it" style="top:302.0px;"><span class="tx" style="left:50.5px">Декларації</span></div>
<div class="it" style="top:350.0px;"><span class="tx" style="left:50.5px">Прийоми</span></div>
<div class="it" style="top:390.0px;"><span class="tx" style="left:50.5px">Виписані</span></div>
<div class="it" style="top:407.0px;"><span class="tx" style="left:50.5px">направлення</span></div>
<div class="it" style="top:440.0px;"><span class="tx" style="left:50.5px">Погашені</span></div>
<div class="it" style="top:456.0px;"><span class="tx" style="left:50.5px">направлення</span></div>
<div class="it" style="top:497.0px;"><span class="tx" style="left:52.5px">Рецепти</span></div>
<div class="it" style="top:545.0px;"><span class="tx" style="left:52.5px">Взаємодії</span></div>
<div class="it" style="top:593.0px;"><span class="tx" style="left:50.5px">Вакцинації</span></div>
<div class="it" style="top:633.0px;"><span class="tx" style="left:52.5px">Медичні</span></div>
<div class="it" style="top:650.0px;"><span class="tx" style="left:52.5px">документи</span></div>
<div class="it" style="top:691.0px;"><span class="tx" style="left:50.5px">Пакетний підпис</span></div>
<div class="hr" style="top:722px"></div>
<div class="sec" style="top:740px;line-height:15px;letter-spacing:.65px">ДОВІДНИКИ</div>
<div class="it" style="top:787.0px;font-size:13px"><span class="tx" style="left:54.5px">Загальні</span></div>
<div class="it" style="top:837.0px;"><span class="tx" style="left:52.5px">Лікарські засоби</span></div>
</div>
<div class="abs sb"></div><div class="abs sbt"></div>
<div class="abs" style="left:4px;top:234px;width:187px;height:53px;border:6px solid #e30303;border-radius:3px;box-shadow:0 1px 2px rgba(0,0,0,.35)"></div>
<div class="abs" style="left:1536px;top:51px;width:195px;height:51px;border:6px solid #e30303;border-radius:3px;box-shadow:0 1px 2px rgba(0,0,0,.35)"></div>
<div class="abs" style="left:211.7px;top:479.3px;width:59.30000000000001px;height:61.19999999999999px;border:6px solid #e30303;border-radius:3px;box-shadow:0 1px 2px rgba(0,0,0,.35)"></div>
<svg class="abs" style="left:0;top:0" width="1924" height="854" viewBox="0 0 1924 854"><path d="M474.2,255.1L459.4,275.3L442.1,298.6L421.7,325.8L399.9,354.5L390.2,367.2L362.7,402.8L345.1,425.9L328.2,448.2L309.1,473.8L295.3,491.0L301.4,490.2L302.8,491.9L301.6,493.8L279.7,503.6L283.2,479.8L284.7,478.3L286.6,478.8L287.3,484.0L301.3,467.8L321.6,443.1L339.2,421.3L357.3,398.6L385.3,363.4L395.3,350.9L417.9,322.8L439.4,296.5L457.8,274.1L473.8,254.9Z" fill="#e30303" stroke="#e30303" stroke-width="1" stroke-linejoin="round"/></svg>
</body></html>
